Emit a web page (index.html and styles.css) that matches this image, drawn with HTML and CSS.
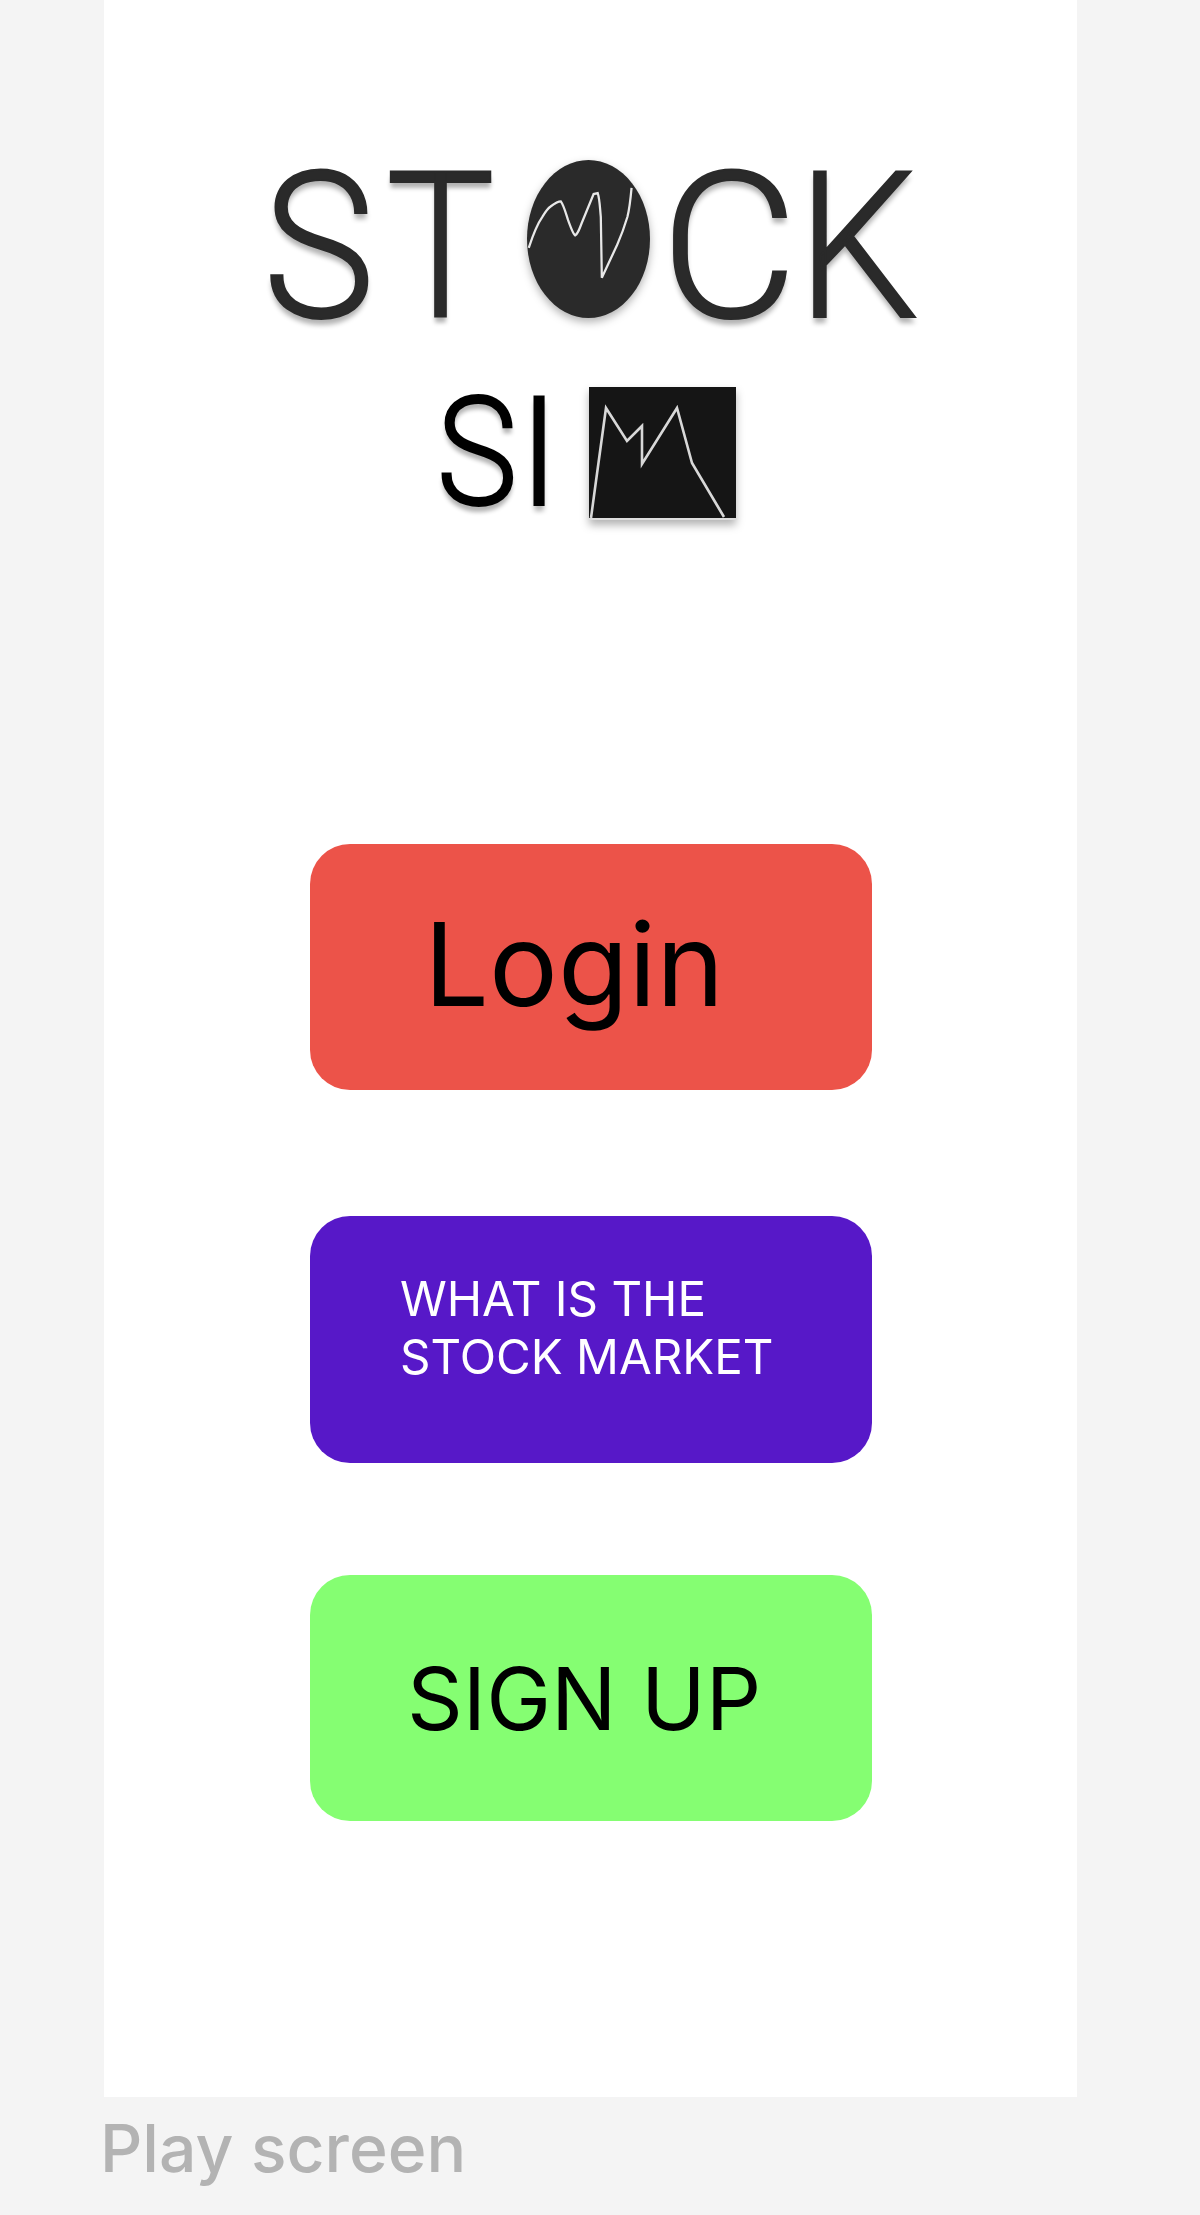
FILE: index.html
```html
<!DOCTYPE html>
<html lang="en">

<head>
    <meta charset="UTF-8">
    <meta name="viewport" content="width=device-width, initial-scale=1.0">
    <title>Play screen</title>
    <link rel="stylesheet" href="styles.css">
</head>

<body>
    <div class="screen">

        <div class="logo-stock">
            <span class="letter l-s">S</span>
            <span class="letter l-t">T</span>
            <svg class="logo-oval" viewBox="0 0 120 153" preserveAspectRatio="none">
                <ellipse cx="60" cy="76.5" rx="60" ry="76.5" fill="#2a2a2a" />
                <path d="M1.7 85C6 72 10 62 15 55C18 50 20 47 23 45C27 42 30 40 33 40C36 44 38 52 40 58C43 66 45 72 47 73C50 71 51 67 53 62L65 33L69 32C71 38 71 45 72 55L73 114L88 82C92 73 95 65 98 55C100 47 101 38 102 27" fill="none" stroke="#e8e8e8" stroke-width="2.2" />
            </svg>
            <span class="letter l-c">C</span>
            <span class="letter l-k">K</span>
        </div>

        <div class="logo-sim">
            <span class="letter l-s2">S</span>
            <span class="letter l-i">I</span>
            <svg class="logo-square" viewBox="0 0 147 131">
                <rect width="147" height="131" fill="#151515" />
                <path d="M2 131L7 94L17 21L38 54L53 39V77L88 21L103 76L135 130" fill="none" stroke="#d8d8d8" stroke-width="2.6" />
            </svg>
        </div>

        <button type="button" class="btn btn-login">Login</button>
        <button type="button" class="btn btn-what">WHAT IS THE<br>STOCK MARKET</button>
        <button type="button" class="btn btn-signup">SIGN UP</button>

    </div>

    <div class="caption">Play screen</div>
</body>

</html>
```

FILE: styles.css
```css
html,
body {
    margin: 0;
    height: 2215px;
    overflow: hidden;
    background-color: #f4f4f4;
    font-family: Inter, "Liberation Sans", sans-serif;
}

.screen {
    width: 973px;
    height: 2097px;
    margin-left: 104px;
    padding-top: 160px;
    box-sizing: border-box;
    background-color: #fff;
    filter: blur(.6px);
}

/* logo */
.logo-stock,
.logo-sim {
    display: flex;
    font-family: Roboto, sans-serif;
    font-weight: 300;
}

.logo-stock {
    height: 160px;
    padding-left: 164px;
    color: #2a2a2a;
    font-size: 205px;
    line-height: 174px;
}

.logo-sim {
    height: 133px;
    margin-top: 67px;
    padding-left: 337px;
    color: #000;
    font-size: 152px;
    line-height: 133px;
}

.letter {
    display: flex;
    justify-content: center;
    -webkit-text-stroke: 2px currentColor;
    text-shadow: 0 6px 5px rgba(0, 0, 0, .3);
}

.l-s {
    width: 102px;
    transform: scaleX(.92);
}

.l-t {
    width: 103px;
    margin-left: 19px;
    transform: scaleX(.89);
}

.l-c {
    width: 116px;
    margin-left: 21px;
    transform: scaleX(1.03);
}

.l-k {
    width: 103px;
    margin-left: 19px;
    transform: scaleX(.94);
}

.l-s2 {
    width: 72px;
    transform: scaleX(.9);
}

.l-i {
    width: 18px;
    margin-left: 17px;
}

.logo-oval {
    width: 123px;
    height: 158px;
    margin-left: 35px;
    filter: drop-shadow(0 4px 4px rgba(0, 0, 0, .3));
}

.logo-square {
    width: 147px;
    height: 131px;
    margin-left: 41px;
    border-bottom: 2px solid #ddd;
    filter: drop-shadow(0 5px 4px rgba(0, 0, 0, .3));
}

/* buttons */
.btn {
    display: block;
    width: 562px;
    height: 246px;
    margin-left: 206px;
    border: none;
    border-radius: 40px;
    box-sizing: border-box;
    font-family: inherit;
    font-weight: 400;
    text-align: left;
    vertical-align: top;
}

.btn-login {
    margin-top: 324px;
    padding: 0 0 6px 114px;
    background-color: #ec5349;
    color: #000;
    font-size: 115px;
    line-height: 1;
}

.btn-what {
    height: 247px;
    margin-top: 126px;
    padding: 0 0 24px 90px;
    background-color: #5718c8;
    color: #fff;
    font-size: 47.5px;
    line-height: 58px;
}

.btn-signup {
    margin-top: 112px;
    padding: 0 0 0 97px;
    background-color: #85fe72;
    color: #000;
    font-size: 87px;
    line-height: 1;
}

.caption {
    margin: 11px 0 0 100px;
    color: #b3b3b3;
    font-size: 66px;
    font-weight: 500;
    line-height: 80px;
    filter: blur(.6px);
}
```
